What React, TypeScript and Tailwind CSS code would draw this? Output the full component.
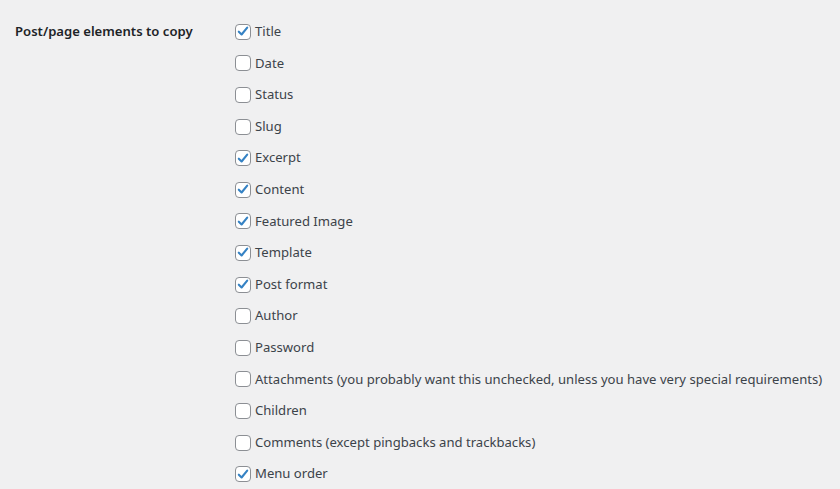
const items: [string, boolean][] = [
  ["Title", true],
  ["Date", false],
  ["Status", false],
  ["Slug", false],
  ["Excerpt", true],
  ["Content", true],
  ["Featured Image", true],
  ["Template", true],
  ["Post format", true],
  ["Author", false],
  ["Password", false],
  ["Attachments (you probably want this unchecked, unless you have very special requirements)", false],
  ["Children", false],
  ["Comments (except pingbacks and trackbacks)", false],
  ["Menu order", true],
];

const Checkbox = ({ checked }: { checked: boolean }) => (
  <span className="w-4 h-4 shrink-0 rounded-[4px] border border-[#8c8f94] bg-white flex items-center justify-center">
    {checked && (
      <svg viewBox="0 0 16 16" className="w-[15px] h-[15px]">
        <path d="M3.2 8.2 L6.4 11.4 L12.8 3.6" fill="none" stroke="#3582c4" strokeWidth="2.4" strokeLinecap="round" strokeLinejoin="round" />
      </svg>
    )}
  </span>
);

export default function App() {
  return (
    <div className="min-h-screen w-full bg-[#f0f0f1] font-['Noto_Sans',sans-serif] text-[13.1px] text-[#3c434a]">
      <div className="flex pl-[15px] pt-[16px]">
        <div className="w-[220px] shrink-0 h-[31.6px] flex items-center font-semibold text-[#1d2327]">
          Post/page elements to copy
        </div>
        <div className="flex flex-col">
          {items.map(([label, checked]) => (
            <label key={label} className="h-[31.6px] flex items-center gap-[4px] whitespace-nowrap">
              <Checkbox checked={checked} />
              <span>{label}</span>
            </label>
          ))}
        </div>
      </div>
    </div>
  );
}
